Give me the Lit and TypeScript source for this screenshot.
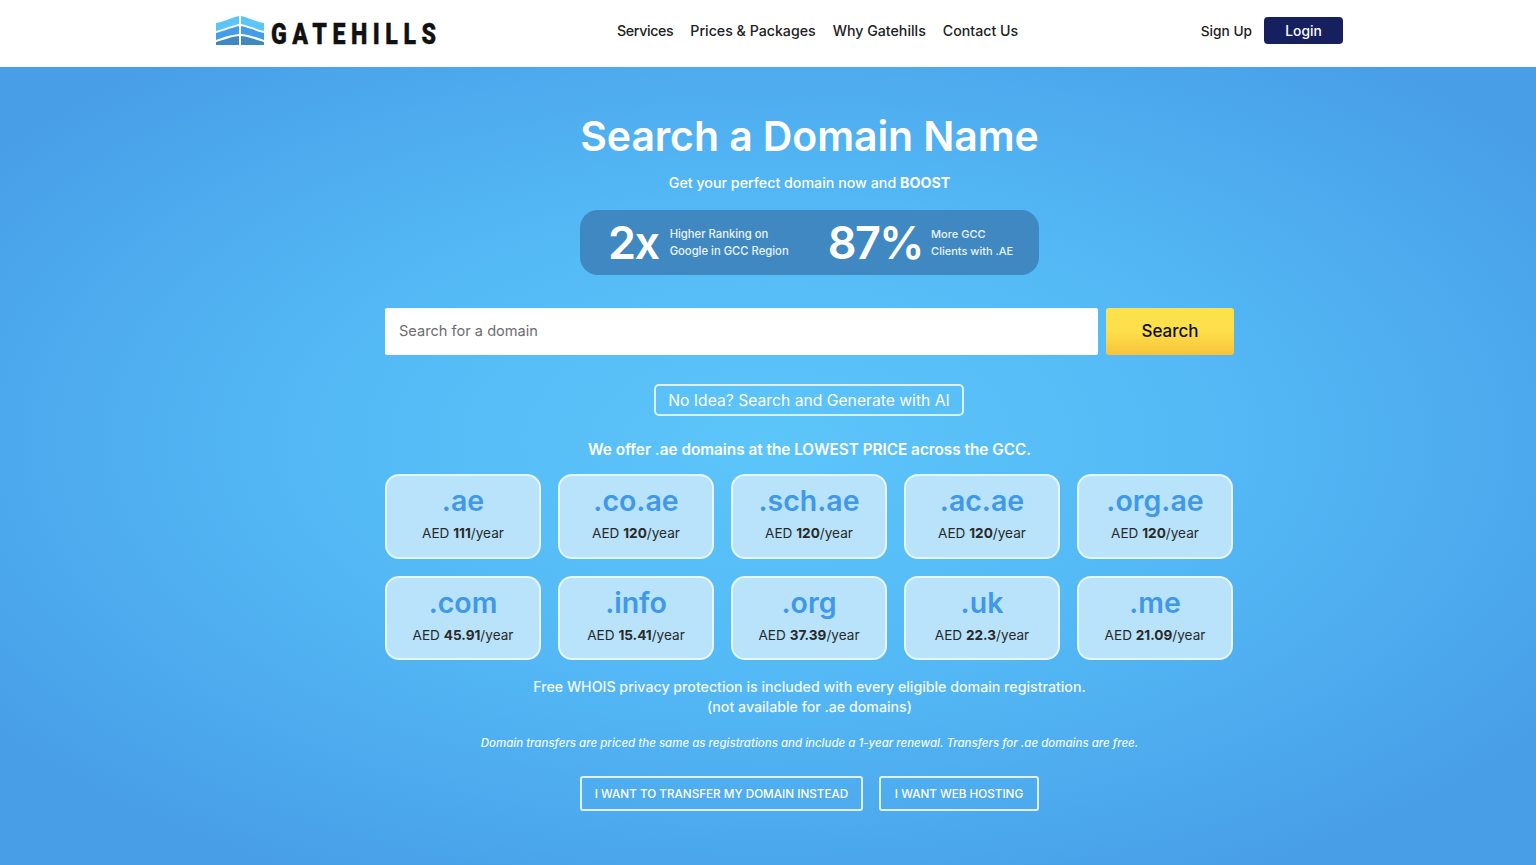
import { LitElement, html, svg, css } from "lit";
import { customElement } from "lit/decorators.js";

const row1 = [[".ae","111"],[".co.ae","120"],[".sch.ae","120"],[".ac.ae","120"],[".org.ae","120"]];
const row2 = [[".com","45.91"],[".info","15.41"],[".org","37.39"],[".uk","22.3"],[".me","21.09"]];

@customElement("app-root")
export class AppRoot extends LitElement {
  static styles = css`
    :host { display: block; font-family: Inter, "Noto Sans", sans-serif; height: 865px; overflow: hidden; }
    header { height: 67px; background: #fff; display: flex; align-items: center; padding: 0 193px 6px 216px; box-sizing: border-box; }
    .logo { display: flex; align-items: center; gap: 7px; width: 401px; }
    .logo svg { display: block; }
    .word { font-family: Roboto, sans-serif; font-weight: 900; font-size: 29px; line-height: 30px; color: #111; letter-spacing: 6.9px; -webkit-text-stroke: .4px #111; transform: scaleX(.8); transform-origin: left center; white-space: nowrap; width: 166px; margin-top: 7px; }
    nav { display: flex; gap: 17px; font-size: 14.2px; font-weight: 500; color: #222; }
    .svc { letter-spacing: -.35px; }
    .right { margin-left: auto; display: flex; align-items: center; gap: 12px; font-size: 13.7px; font-weight: 500; color: #222; }
    .login { width: 79px; height: 27px; background: #16205f; color: #fff; border-radius: 4px; display: flex; align-items: center; justify-content: center; font-size: 13.8px; }
    main { height: 798px; box-sizing: border-box; padding: 46px 0 0 83px; display: flex; flex-direction: column; align-items: center; color: #fff;
      background: radial-gradient(ellipse 62% 62% at 50% 47%, #5cc5f9 0%, #54baf6 45%, #489fe8 100%); }
    h1 { margin: 0; font-size: 41px; line-height: 46px; font-weight: 600; letter-spacing: -.1px; }
    .sub { margin-top: 14px; font-size: 14.25px; line-height: 20px; font-weight: 500; }
    .sub b { font-weight: 700; }
    .stats { margin-top: 17px; width: 459px; height: 65px; border-radius: 18px; background: #3f88c1; display: flex; align-items: center; box-sizing: border-box; padding-left: 28px; }
    .big { font-weight: 600; font-size: 45px; line-height: 1; letter-spacing: -1.5px; }
    .small { font-size: 11.25px; line-height: 17px; font-weight: 500; color: #e9f4fb; white-space: nowrap; }
    .s1 { margin-left: 11px; width: 158px; }
    .s2 { margin-left: 8px; font-size: 11px; }
    .searchrow { margin-top: 33px; width: 849px; display: flex; gap: 8px; }
    .input { flex: 1; height: 47px; background: #fff; border-radius: 2px; display: flex; align-items: center; padding: 0 0 1px 14px; box-sizing: border-box; color: #6d6d6d; font-size: 14.6px; }
    .go { width: 128px; height: 47px; padding-bottom: 2px; box-sizing: border-box; border-radius: 3px; background: linear-gradient(#fde24c 0%, #fddf4a 50%, #f8c23a 100%); color: #111; font-weight: 500; font-size: 17px; display: flex; align-items: center; justify-content: center; }
    .ai { margin: 29px 1px 0 0; width: 310px; height: 32px; box-sizing: border-box; border: 2px solid #ddf1fd; border-radius: 5px; display: flex; align-items: center; justify-content: center; font-size: 15.7px; font-weight: 400; }
    .offer { margin-top: 24px; font-size: 15.3px; line-height: 20px; font-weight: 600; }
    .grid { margin: 14px 1px 0 0; width: 848px; display: grid; grid-template-columns: repeat(5, 156px); gap: 17px; }
    .card { height: 84.5px; box-sizing: border-box; border: 2px solid #e6f5fe; border-radius: 14px; background: #b8e3fb; display: flex; flex-direction: column; align-items: center; }
    .tld { margin-top: 8px; font-size: 28.5px; line-height: 34px; font-weight: 600; color: #3f98e8; }
    .price { margin-top: 5px; font-size: 13.6px; line-height: 20px; color: #2a2a2a; white-space: nowrap; }
    .price b { font-weight: 700; }
    .note { margin-top: 17px; font-size: 14.2px; line-height: 20px; text-align: center; font-weight: 500; color: #f2f9fe; }
    .it { margin-top: 18px; font-size: 11.5px; line-height: 16px; font-style: italic; font-weight: 500; color: #f2f9fe; }
    .btns { margin-top: 25px; display: flex; gap: 16px; }
    .btn { height: 35px; box-sizing: border-box; border: 2px solid #ddf1fd; border-radius: 3px; display: flex; align-items: center; justify-content: center; font-size: 11.7px; font-weight: 500; }
    .b1 { width: 283px; } .b2 { width: 160px; }
  `;

  card(c: string[]) {
    return html`<div class="card"><div class="tld">${c[0]}</div><div class="price">AED <b>${c[1]}</b>/year</div></div>`;
  }

  render() {
    const half = svg`
      <path d="M0 7 C8 6 14 2 23 0 V8 C14 10 8 13 0 15Z" fill="#5cc5f8"/>
      <path d="M0 17 C8 15 14 12 23 10 V18 C14 19 8 21 0 24Z" fill="#429cea"/>
      <path d="M0 26 C8 24 14 21 23 20 V29 H0Z" fill="#3f88c1"/>`;
    return html`
      <header>
        <div class="logo">
          <svg width="48" height="29" viewBox="0 0 48 29" aria-hidden="true">
            <g>${half}</g>
            <g transform="translate(48 0) scale(-1 1)">${half}</g>
          </svg>
          <div class="word">GATEHILLS</div>
        </div>
        <nav><span class="svc">Services</span><span>Prices &amp; Packages</span><span>Why Gatehills</span><span>Contact Us</span></nav>
        <div class="right"><span>Sign Up</span><div class="login">Login</div></div>
      </header>
      <main>
        <h1>Search a Domain Name</h1>
        <div class="sub">Get your perfect domain now and <b>BOOST</b></div>
        <div class="stats">
          <div class="big">2x</div>
          <div class="small s1">Higher Ranking on<br />Google in GCC Region</div>
          <div class="big">87%</div>
          <div class="small s2">More GCC<br />Clients with .AE</div>
        </div>
        <div class="searchrow"><div class="input">Search for a domain</div><div class="go">Search</div></div>
        <div class="ai">No Idea? Search and Generate with AI</div>
        <div class="offer">We offer .ae domains at the LOWEST PRICE across the GCC.</div>
        <div class="grid">${row1.map((c) => this.card(c))}${row2.map((c) => this.card(c))}</div>
        <div class="note">Free WHOIS privacy protection is included with every eligible domain registration.<br />(not available for .ae domains)</div>
        <div class="it">Domain transfers are priced the same as registrations and include a 1-year renewal. Transfers for .ae domains are free.</div>
        <div class="btns"><div class="btn b1">I WANT TO TRANSFER MY DOMAIN INSTEAD</div><div class="btn b2">I WANT WEB HOSTING</div></div>
      </main>
    `;
  }
}
